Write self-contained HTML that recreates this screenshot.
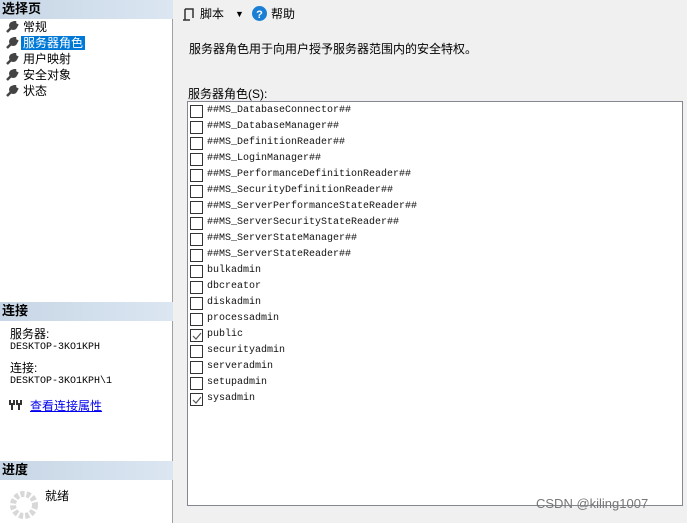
<!DOCTYPE html>
<html><head><meta charset="utf-8"><style>
*{margin:0;padding:0;box-sizing:border-box}
body{width:687px;height:523px;background:#f0f0f0;position:relative;overflow:hidden;font-family:"Liberation Sans","Noto Sans CJK SC",sans-serif;font-size:12px;color:#000}
.left{position:absolute;left:0;top:0;width:173px;height:523px;background:#fff;border-right:1px solid #a0a0a0}
.hdr{position:absolute;left:0;width:173px;height:19px;background:linear-gradient(to right,#c7d6e6,#dbe6f1);font-weight:bold;font-size:13px;line-height:18px;padding-left:2px}
.nav{position:absolute;left:6px;font-size:12px;line-height:16px}
.nav div{height:16px;position:relative;padding-left:17px}
.wr{position:absolute;left:0;top:2px;width:13px;height:12px}
.sel{background:#0078d7;color:#fff;padding:0 2px;margin-left:-2px}
.mono{font-family:"Liberation Mono","Noto Sans CJK SC",monospace;font-size:10px}
.box{position:absolute;left:187px;top:101px;width:496px;height:405px;background:#fff;border:1px solid #828790}
.row{height:16px;position:relative;padding-left:19px;line-height:17px;font-family:"Liberation Mono",monospace;font-size:10px;color:#111}
.cb{position:absolute;left:2px;top:3px;width:13px;height:13px;border:1px solid #333;background:#fff}
</style></head><body>
<div class="left">
<div class="hdr" style="top:0">选择页</div>
<div class="nav" style="top:19px">
<div><svg class="wr" viewBox="0 0 13 12"><path d="M1 11 L7 5 M6 2 a3 3 0 1 0 4 4 L11 4 L9 3 L9 1 Z" stroke="#444" stroke-width="2.5" fill="#444"/></svg>常规</div>
<div><svg class="wr" viewBox="0 0 13 12"><path d="M1 11 L7 5 M6 2 a3 3 0 1 0 4 4 L11 4 L9 3 L9 1 Z" stroke="#444" stroke-width="2.5" fill="#444"/></svg><span class="sel">服务器角色</span></div>
<div><svg class="wr" viewBox="0 0 13 12"><path d="M1 11 L7 5 M6 2 a3 3 0 1 0 4 4 L11 4 L9 3 L9 1 Z" stroke="#444" stroke-width="2.5" fill="#444"/></svg>用户映射</div>
<div><svg class="wr" viewBox="0 0 13 12"><path d="M1 11 L7 5 M6 2 a3 3 0 1 0 4 4 L11 4 L9 3 L9 1 Z" stroke="#444" stroke-width="2.5" fill="#444"/></svg>安全对象</div>
<div><svg class="wr" viewBox="0 0 13 12"><path d="M1 11 L7 5 M6 2 a3 3 0 1 0 4 4 L11 4 L9 3 L9 1 Z" stroke="#444" stroke-width="2.5" fill="#444"/></svg>状态</div>
</div>
<div class="hdr" style="top:302px">连接</div>
<div style="position:absolute;left:10px;top:329px;line-height:11px">服务器:<br><span class="mono">DESKTOP-3KO1KPH</span></div>
<div style="position:absolute;left:10px;top:363px;line-height:11px">连接:<br><span class="mono">DESKTOP-3KO1KPH\1</span></div>
<div style="position:absolute;left:9px;top:397px;color:#0000ee;text-decoration:underline;padding-left:21px"><svg style="position:absolute;left:0;top:2px" width="14" height="11" viewBox="0 0 14 11"><path d="M1 1v4h4V1M3 5v6M8 1v4h4V1M10 5v6" stroke="#333" stroke-width="2" fill="none"/></svg>查看连接属性</div>
<div class="hdr" style="top:461px">进度</div>
<svg style="position:absolute;left:9px;top:490px" width="30" height="30" viewBox="0 0 30 30"><circle cx="15" cy="15" r="11" stroke="#d8d8d8" stroke-width="6" fill="none" stroke-dasharray="4 2"/></svg>
<div style="position:absolute;left:45px;top:487px">就绪</div>
</div>
<div style="position:absolute;left:182px;top:6px;font-size:12px;line-height:16px">
<svg style="position:absolute;left:0;top:2px" width="12" height="13" viewBox="0 0 12 13"><path d="M3 1h8v9M3 1v11H1M3 12h5" stroke="#333" stroke-width="1.5" fill="none"/></svg>
<span style="position:absolute;left:18px;white-space:nowrap">脚本</span>
<span style="position:absolute;left:53px;top:0;font-size:9px">▼</span>
<svg style="position:absolute;left:70px;top:0" width="15" height="15"><circle cx="7.5" cy="7.5" r="7.5" fill="#1a7fd4"/><text x="7.5" y="12" font-size="11" font-weight="bold" fill="#fff" text-anchor="middle" font-family="Liberation Sans">?</text></svg>
<span style="position:absolute;left:89px;white-space:nowrap">帮助</span>
</div>
<div style="position:absolute;left:189px;top:40px;white-space:nowrap">服务器角色用于向用户授予服务器范围内的安全特权。</div>
<div style="position:absolute;left:188px;top:85px;white-space:nowrap">服务器角色(S):</div>
<div class="box"><div>
<div class="row"><i class="cb"></i>##MS_DatabaseConnector##</div>
<div class="row"><i class="cb"></i>##MS_DatabaseManager##</div>
<div class="row"><i class="cb"></i>##MS_DefinitionReader##</div>
<div class="row"><i class="cb"></i>##MS_LoginManager##</div>
<div class="row"><i class="cb"></i>##MS_PerformanceDefinitionReader##</div>
<div class="row"><i class="cb"></i>##MS_SecurityDefinitionReader##</div>
<div class="row"><i class="cb"></i>##MS_ServerPerformanceStateReader##</div>
<div class="row"><i class="cb"></i>##MS_ServerSecurityStateReader##</div>
<div class="row"><i class="cb"></i>##MS_ServerStateManager##</div>
<div class="row"><i class="cb"></i>##MS_ServerStateReader##</div>
<div class="row"><i class="cb"></i>bulkadmin</div>
<div class="row"><i class="cb"></i>dbcreator</div>
<div class="row"><i class="cb"></i>diskadmin</div>
<div class="row"><i class="cb"></i>processadmin</div>
<div class="row"><i class="cb"><svg width="11" height="11" style="position:absolute;left:0;top:0"><path d="M2 6l3 3 5-6" stroke="#555" stroke-width="1.2" fill="none"/></svg></i>public</div>
<div class="row"><i class="cb"></i>securityadmin</div>
<div class="row"><i class="cb"></i>serveradmin</div>
<div class="row"><i class="cb"></i>setupadmin</div>
<div class="row"><i class="cb"><svg width="11" height="11" style="position:absolute;left:0;top:0"><path d="M2 6l3 3 5-6" stroke="#555" stroke-width="1.2" fill="none"/></svg></i>sysadmin</div>
</div></div>
<div style="position:absolute;left:536px;top:496px;color:#777;font-size:13px;white-space:nowrap">CSDN @kiling1007</div>
</body></html>
